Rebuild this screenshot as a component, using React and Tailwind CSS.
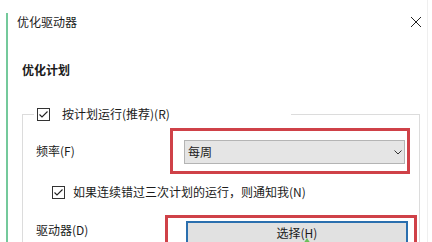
export default function App() {
  return (
    <div
      className="w-[432px] h-[242px] overflow-hidden bg-white text-[12px] leading-[16px] text-[#1b1b1b]"
      style={{ fontFamily: '"Noto Sans CJK SC", "Noto Sans", sans-serif' }}
    >
      <div className="w-[428px] h-[242px] border-r border-[#efefef] pt-[13px] pl-[6px]">
        <div className="h-full border-l-2 border-[#74c99b]">
          <div className="flex items-center justify-between pt-[1px] pl-[9px] pr-[5px]">
            <span>优化驱动器</span>
            <CloseIcon />
          </div>

          <div className="mt-[32px] pl-[14px] font-bold">优化计划</div>

          <fieldset className="mt-[28px] ml-[14px] w-[398px] h-[200px] border border-[#dcdcdc]">
            <legend className="ml-[11px] w-[257px] px-[3px] flex items-center gap-[12px]">
              <CheckBox />
              <span>按计划运行(推荐)(R)</span>
            </legend>

            <div className="pt-[6px]">
              <div className="flex items-center">
                <span className="w-[147px] pl-[13px]">频率(F)</span>
                <div className="border-[3px] border-[#cf4148] pl-[11px] pt-[9px] pr-[2px] pb-[7px]">
                  <div className="w-[221px] h-[24px] bg-[#e5e5e5] border border-[#b4b4b4] flex items-center justify-between pl-[3px] pr-[2px]">
                    <span>每周</span>
                    <svg width="8" height="5" viewBox="0 0 8 5" fill="none">
                      <path d="M0.5 0.5 L4 4 L7.5 0.5" stroke="#333" strokeWidth="1" />
                    </svg>
                  </div>
                </div>
              </div>

              <div className="mt-[10px] ml-[29px] flex items-center gap-[8px]">
                <CheckBox />
                <span>如果连续错过三次计划的运行，则通知我(N)</span>
              </div>

              <div className="mt-[15px] flex items-start">
                <span className="w-[142px] pl-[13px] mt-[7px]">驱动器(D)</span>
                <div className="w-[252px] border-[3px] border-[#cf4148] pl-[18px] pt-[3px] pr-[6px]">
                  <div className="relative h-[30px] bg-[#e1e1e1] border-2 border-[#2b6fae] flex justify-center pt-[2px]">
                    <span>选择(H)</span>
                    <svg className="absolute left-[115px] top-[15px]" width="8" height="8" viewBox="0 0 8 8">
                      <path d="M4 0 L8 6 L0 6 Z" fill="#6cbf5a" />
                    </svg>
                  </div>
                </div>
              </div>
            </div>
          </fieldset>
        </div>
      </div>
    </div>
  );
}

function CheckBox() {
  return (
    <svg width="13" height="13" viewBox="0 0 13 13" fill="none" className="shrink-0">
      <rect x="0.5" y="0.5" width="12" height="12" fill="#fff" stroke="#333" />
      <path d="M2.5 6.5 L5 9 L10.5 3.5" stroke="#222" strokeWidth="1.1" />
    </svg>
  );
}

function CloseIcon() {
  return (
    <svg width="12" height="12" viewBox="0 0 12 12" fill="none">
      <path d="M1 1 L11 11 M11 1 L1 11" stroke="#222" strokeWidth="1" />
    </svg>
  );
}
